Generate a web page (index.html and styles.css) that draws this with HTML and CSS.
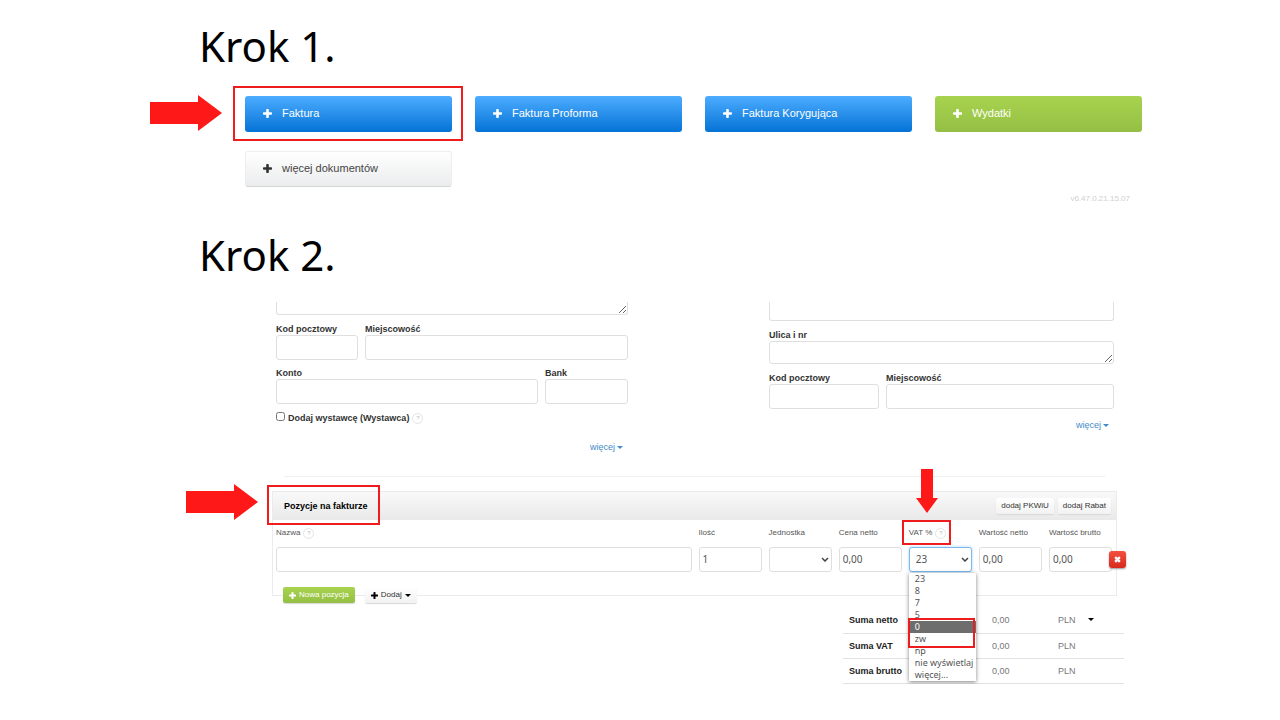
FILE: index.html
```html
<!DOCTYPE html>
<html lang="pl">
<head>
  <meta charset="UTF-8">
  <meta name="viewport" content="width=device-width, initial-scale=1.0">
  <title>Faktura</title>
  <link rel="stylesheet" href="styles.css">
</head>
<body>
  <svg class="sprite" width="0" height="0" aria-hidden="true">
    <symbol id="plus" viewBox="0 0 9 9"><path d="M3.9 0h1.2q.7 0 .7.7v2.5h2.5q.7 0 .7.7v1.2q0 .7-.7.7H5.8v2.5q0 .7-.7.7H3.9q-.7 0-.7-.7V5.8H.7Q0 5.8 0 5.1V3.9q0-.7.7-.7h2.5V.7q0-.7.7-.7z"/></symbol>
    <symbol id="caret" viewBox="0 0 6 3"><path d="M0 0h6L3 3z"/></symbol>
    <symbol id="chevron" viewBox="0 0 8 5"><path d="M1 1l3 3 3-3" fill="none" stroke="#444" stroke-width="1.5"/></symbol>
    <symbol id="arrow" viewBox="0 0 72 36"><path d="M0 7h48V0l24 18-24 18v-7H0z"/></symbol>
    <symbol id="arrow-down" viewBox="0 0 22 44"><path d="M5 0h12v29h5L11 44 0 29h5z"/></symbol>
  </svg>

  <main>
    <section>
      <h1>Krok 1.</h1>
      <div class="tiles">
        <div class="marked">
          <svg class="arrow arrow-tile"><use href="#arrow"/></svg>
          <button class="tile blue" type="button"><svg class="plus"><use href="#plus"/></svg>Faktura</button>
          <span class="frame frame-tile"></span>
        </div>
        <button class="tile blue" type="button"><svg class="plus"><use href="#plus"/></svg>Faktura Proforma</button>
        <button class="tile blue" type="button"><svg class="plus"><use href="#plus"/></svg>Faktura Korygująca</button>
        <button class="tile green" type="button"><svg class="plus"><use href="#plus"/></svg>Wydatki</button>
        <button class="tile gray" type="button"><svg class="plus"><use href="#plus"/></svg>więcej dokumentów</button>
      </div>
      <p class="version">v6.47.0.21.15.07</p>
    </section>

    <section>
      <h1>Krok 2.</h1>
      <form class="invoice">
        <div class="parties">
          <div class="seller">
            <textarea class="cut cut-left" aria-label="Ulica i nr sprzedawcy"></textarea>
            <div class="row row-zip">
              <div class="field"><label for="s-zip">Kod pocztowy</label><input id="s-zip" type="text"></div>
              <div class="field"><label for="s-city">Miejscowość</label><input id="s-city" type="text"></div>
            </div>
            <div class="row row-bank">
              <div class="field"><label for="s-account">Konto</label><input id="s-account" type="text"></div>
              <div class="field"><label for="s-bank">Bank</label><input id="s-bank" type="text"></div>
            </div>
            <div class="check">
              <input id="issuer" type="checkbox"><label for="issuer">Dodaj wystawcę (Wystawca)</label><span class="help">?</span>
            </div>
            <a class="more more-left" href="#">więcej <svg class="caret"><use href="#caret"/></svg></a>
          </div>
          <div class="buyer">
            <input class="cut cut-right" type="text" aria-label="Nabywca">
            <div class="field field-street"><label for="b-street">Ulica i nr</label><textarea id="b-street"></textarea></div>
            <div class="row row-buyer">
              <div class="field"><label for="b-zip">Kod pocztowy</label><input id="b-zip" type="text"></div>
              <div class="field"><label for="b-city">Miejscowość</label><input id="b-city" type="text"></div>
            </div>
            <a class="more more-right" href="#">więcej <svg class="caret"><use href="#caret"/></svg></a>
          </div>
        </div>

        <hr>

        <div class="panel">
          <div class="panel-head">
            <h2 class="marked">
              Pozycje na fakturze
              <svg class="arrow arrow-title"><use href="#arrow"/></svg>
              <span class="frame frame-title"></span>
            </h2>
            <button class="small" type="button">dodaj PKWiU</button>
            <button class="small" type="button">dodaj Rabat</button>
          </div>
          <div class="items">
            <div class="item"><div class="head"><label for="name">Nazwa</label><span class="help">?</span></div><input id="name" type="text"></div>
            <div class="item"><div class="head"><label for="qty">Ilość</label></div><input id="qty" type="text" value="1"></div>
            <div class="item">
              <div class="head"><label for="unit">Jednostka</label></div>
              <div class="select"><select id="unit"><option></option></select><svg class="chevron"><use href="#chevron"/></svg></div>
            </div>
            <div class="item"><div class="head"><label for="price">Cena netto</label></div><input id="price" type="text" value="0,00"></div>
            <div class="item">
              <div class="head marked">
                <label for="vat">VAT %</label><span class="help">?</span>
                <svg class="arrow-vat"><use href="#arrow-down"/></svg>
                <span class="frame frame-vat"></span>
              </div>
              <div class="select open">
                <select id="vat"><option>23</option></select><svg class="chevron"><use href="#chevron"/></svg>
                <ul class="menu" role="listbox" aria-label="VAT %">
                  <li role="option">23</li>
                  <li role="option">8</li>
                  <li role="option">7</li>
                  <li role="option">5</li>
                  <li class="active" role="option">0</li>
                  <li role="option">zw</li>
                  <li role="option">np</li>
                  <li role="option">nie wyświetlaj</li>
                  <li role="option">więcej...</li>
                </ul>
                <span class="frame frame-rate"></span>
              </div>
            </div>
            <div class="item"><div class="head"><label for="net">Wartość netto</label></div><input id="net" type="text" value="0,00"></div>
            <div class="item last">
              <div class="head"><label for="gross">Wartość brutto</label></div><input id="gross" type="text" value="0,00">
              <button class="remove" type="button" aria-label="Usuń"><svg viewBox="0 0 6 6"><path d="M1 1l4 4M5 1L1 5"/></svg></button>
            </div>
          </div>
        </div>

        <div class="actions">
          <button class="small add" type="button"><svg><use href="#plus"/></svg>Nowa pozycja</button>
          <button class="small" type="button"><svg><use href="#plus"/></svg>Dodaj <svg class="caret"><use href="#caret"/></svg></button>
        </div>

        <table class="sums">
          <tr><th>Suma netto</th><td>0,00</td><td>PLN <svg class="caret"><use href="#caret"/></svg></td></tr>
          <tr><th>Suma VAT</th><td>0,00</td><td>PLN</td></tr>
          <tr><th>Suma brutto</th><td>0,00</td><td>PLN</td></tr>
        </table>
      </form>
    </section>
  </main>
</body>
</html>
```
FILE: styles.css
```css
:root {
  --red: #fe1818;
  --line: #dfdfdf;
  --text: #333;
  --link: #428bca;
}

* {
  box-sizing: border-box;
}

body {
  margin: 0;
  background: #fff;
  color: var(--text);
  font-family: "Liberation Sans", Arial, sans-serif;
  font-size: 9px;
  line-height: 12px;
}

main {
  padding-top: 16px;
}

.sprite {
  position: absolute;
}

h1 {
  margin: 0 0 20px 199px;
  color: #000;
  font: 400 42px/60px "Noto Sans", sans-serif;
}

input, select, textarea, button {
  font: inherit;
  color: inherit;
}

.marked {
  position: relative;
}

.arrow {
  position: absolute;
  width: 72px;
  height: 36px;
  fill: var(--red);
}

.frame {
  position: absolute;
  border: 2px solid #ee1c1c;
  pointer-events: none;
}

/* Krok 1 */
.tiles {
  display: grid;
  grid-template-columns: repeat(4, 1fr);
  gap: 19px 23px;
  margin: 0 138px 0 245px;
}

.tile {
  display: flex;
  align-items: center;
  gap: 10px;
  width: 100%;
  height: 36px;
  padding: 0 18px 2px;
  border: 0;
  border-radius: 3px;
  font-size: 11px;
  color: #fff;
  fill: #fff;
}

.plus {
  width: 9px;
  height: 9px;
}

.blue {
  background: linear-gradient(#4dacff, #0473d6);
}

.green {
  background: linear-gradient(#a8d34f, #95bf44);
}

.gray {
  background: linear-gradient(#fff, #ebeced);
  border: 1px solid #eee;
  border-bottom-color: #d4d6d6;
  padding: 0 17px 2px;
  color: #444;
  fill: #333;
}

.arrow-tile {
  left: -95px;
  top: -1px;
}

.frame-tile {
  inset: -10px -11px -9px -12px;
}

.version {
  margin: 6px 150px 20px 0;
  text-align: right;
  font-size: 8px;
  color: #d0d0d0;
}

/* Krok 2 */
.invoice {
  margin: -3px 163px 0 272px;
}

.parties {
  display: grid;
  grid-template-columns: 352fr 345fr;
  gap: 141px;
  padding: 0 3px 0 4px;
}

.row {
  display: grid;
  gap: 7px;
  margin-top: 7px;
}

.row-zip {
  grid-template-columns: 82fr 263fr;
  margin-top: 8px;
}

.row-bank {
  grid-template-columns: 262fr 83fr;
}

.row-buyer {
  grid-template-columns: 110fr 228fr;
  margin-top: 8px;
}

.field {
  display: flex;
  flex-direction: column;
  font-weight: bold;
}

input[type="text"], textarea, select {
  display: block;
  width: 100%;
  height: 25px;
  margin: 0;
  padding: 0 4px;
  border: 1px solid var(--line);
  border-radius: 3px;
  background: #fff;
}

textarea {
  resize: vertical;
}

.field textarea {
  height: 23px;
}

.field-street {
  margin-top: 8px;
}

.parties .cut {
  border-top: 0;
  border-radius: 0 0 3px 3px;
}

.parties .cut-left {
  height: 13px;
  min-height: 0;
}

.parties .cut-right {
  height: 19px;
}

.check {
  display: flex;
  align-items: center;
  gap: 3px;
  margin-top: 8px;
  font-weight: bold;
}

.check input {
  width: 9px;
  height: 9px;
  margin: 0 0 3px;
}

.help {
  width: 11px;
  height: 11px;
  border: 1px solid #e4e4e4;
  border-radius: 50%;
  color: #bbb;
  font-size: 6px;
  font-weight: normal;
  line-height: 9px;
  text-align: center;
}

.more {
  display: flex;
  justify-content: flex-end;
  align-items: center;
  gap: 2px;
  padding-right: 5px;
  color: var(--link);
  fill: var(--link);
  text-decoration: none;
}

.more-left {
  margin-top: 17px;
}

.more-right {
  margin-top: 10px;
}

.caret {
  width: 6px;
  height: 3px;
}

hr {
  height: 1px;
  margin: 23px 12px 14px;
  border: 0;
  background: #f0f0f0;
}

.panel {
  border: 1px solid #ebebeb;
}

.panel-head {
  display: flex;
  align-items: center;
  gap: 4px;
  height: 28px;
  padding: 0 5px 0 11px;
  background: linear-gradient(#f9f9f9, #e9e9e9);
}

h2 {
  margin: 0 auto 0 0;
  font-size: 9px;
  line-height: 12px;
  color: #000;
}

.arrow-title {
  left: -98px;
  top: -16px;
}

.frame-title {
  inset: -15px -12px -13px -17px;
}

.small {
  display: flex;
  align-items: center;
  gap: 3px;
  height: 16px;
  padding: 0 5px;
  border: 0;
  border-radius: 2px;
  background: linear-gradient(#fff, #f2f2f2);
  box-shadow: 0 1px 1px #d8d8d8;
  font-size: 8px;
}

.small svg:first-child {
  width: 7px;
  height: 7px;
}

.items {
  display: grid;
  grid-template-columns: minmax(0, 415fr) repeat(6, minmax(0, 63fr));
  gap: 7px;
  padding: 7px 4px 23px 3px;
  color: #555;
}

.item input, .item select {
  padding-bottom: 1px;
  font-family: "Noto Sans", sans-serif;
  font-size: 10px;
}

.item input {
  padding-left: 3px;
}

.head {
  display: flex;
  align-items: center;
  gap: 3px;
  width: max-content;
  margin-bottom: 8px;
  font-size: 8px;
}

.select {
  position: relative;
}

.select select {
  appearance: none;
  padding-left: 6px;
}

.chevron {
  position: absolute;
  top: 10px;
  right: 3px;
  width: 8px;
  height: 5px;
}

.open select {
  border-color: #7cb8ee;
  box-shadow: 0 0 3px #a9d2f6;
}

.menu {
  position: absolute;
  z-index: 1;
  top: 26px;
  left: 0;
  width: 67px;
  margin: 0;
  padding: 0;
  list-style: none;
  background: #fff;
  box-shadow: 0 1px 4px rgba(0, 0, 0, .5);
  font: 9px/12px "Noto Sans", sans-serif;
  white-space: nowrap;
}

.menu li {
  padding-left: 6px;
}

.menu .active {
  background: #6d6d6d;
  color: #fff;
}

.frame-rate {
  z-index: 2;
  top: 71px;
  left: -1px;
  width: 67px;
  height: 30px;
}

.frame-vat {
  inset: -7px -5px -6px -7px;
}

.arrow-vat {
  position: absolute;
  top: -58px;
  left: 7px;
  width: 22px;
  height: 44px;
  fill: var(--red);
}

.last {
  position: relative;
}

.remove {
  position: absolute;
  right: -14px;
  bottom: 4px;
  width: 17px;
  height: 17px;
  padding: 0;
  border: 0;
  border-radius: 3px;
  background: linear-gradient(#f4503f, #d62a1c);
  box-shadow: 0 1px 2px #999;
}

.remove svg {
  display: block;
  width: 7px;
  margin: auto;
  stroke: #fff;
  stroke-width: 2;
}

.actions {
  position: relative;
  display: flex;
  gap: 10px;
  margin: -9px 0 5px 11px;
}

.actions .small {
  padding: 0 6px;
}

.actions .add {
  background: linear-gradient(#a8d34f, #95bf44);
  color: #fff;
  fill: #fff;
}

.sums {
  width: 281px;
  margin: 0 -7px 0 auto;
  border-collapse: collapse;
  table-layout: fixed;
}

.sums th, .sums td {
  height: 25px;
  padding: 0;
  border-bottom: 1px solid #e2e2e2;
  color: #777;
  text-align: left;
}

.sums th {
  width: 149px;
  padding-left: 6px;
  color: #222;
}

.sums td:nth-child(2) {
  width: 66px;
}

.sums .caret {
  margin: 0 0 2px 10px;
  fill: #000;
}
```
